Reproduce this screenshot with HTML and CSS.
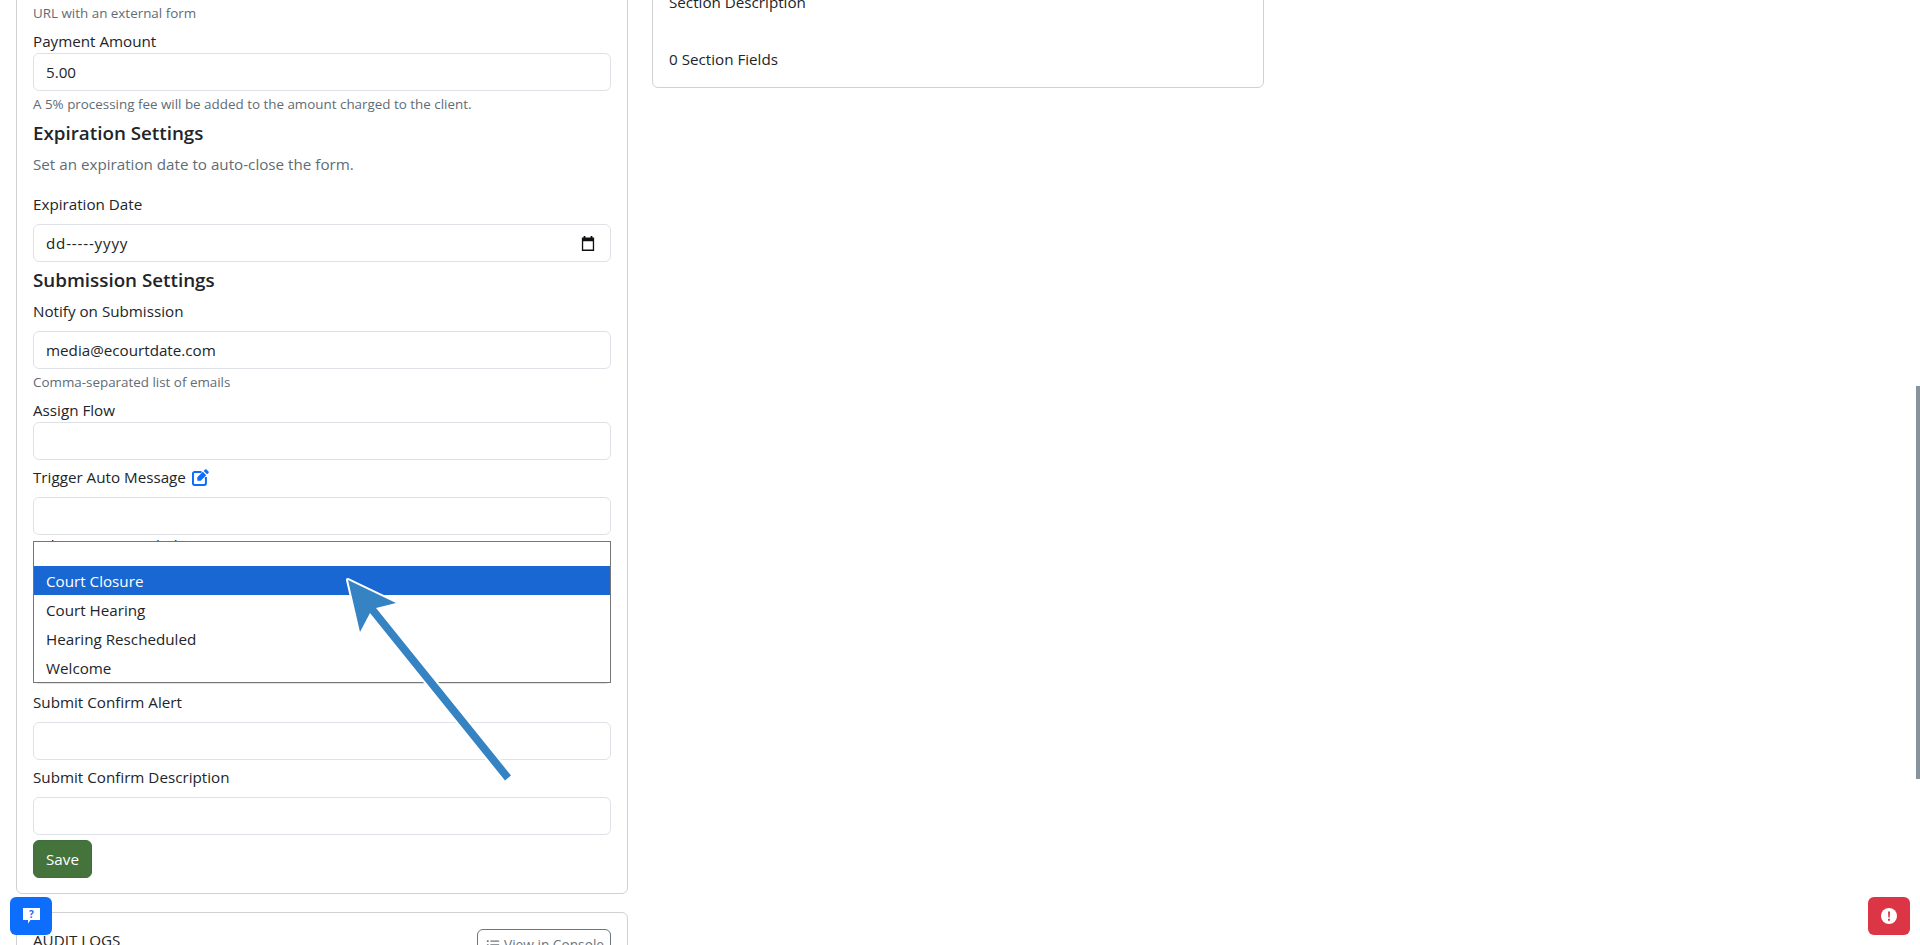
FILE: index.html
```html
<!DOCTYPE html>
<html lang="en">
<head>
    <meta charset="UTF-8">
    <meta name="viewport" content="width=device-width, initial-scale=1.0">
    <title>Form Settings</title>
    <link rel="stylesheet" href="styles.css">
</head>
<body>
    <div class="page">
        <div class="left-col">
            <div class="card form-card">
                <div class="help-text first">URL with an external form</div>

                <label class="field-label tight spaced">Payment Amount</label>
                <input class="form-input" type="text" value="5.00">
                <div class="help-text">A 5% processing fee will be added to the amount charged to the client.</div>

                <h5 class="section-title">Expiration Settings</h5>
                <p class="section-text">Set an expiration date to auto-close the form.</p>
                <label class="field-label">Expiration Date</label>
                <div class="form-input date-input">
                    <span class="date-text">dd-----yyyy</span>
                    <svg class="calendar-icon" viewBox="0 0 16 16" width="14" height="15" preserveAspectRatio="none">
                        <path fill="#111" d="M3 0h2v1.500h6V0h2v1.500h2V16H1V1.500h2zM2.500 5.500v9h11v-9z"/>
                    </svg>
                </div>

                <h5 class="section-title">Submission Settings</h5>
                <label class="field-label">Notify on Submission</label>
                <input class="form-input" type="text" value="media@ecourtdate.com">
                <div class="help-text">Comma-separated list of emails</div>

                <label class="field-label tight spaced">Assign Flow</label>
                <input class="form-input" type="text">

                <label class="field-label spaced">Trigger Auto Message
                    <svg class="edit-icon" viewBox="0 0 16 16" width="17" height="17">
                        <path fill="#0d6efd" d="M15.500 2.300 13.700.500a1 1 0 0 0-1.400 0L11 1.800 14.200 5l1.300-1.300a1 1 0 0 0 0-1.400zM13.400 5.800 10.200 2.600 5 7.800V11h3.200z"/>
                        <path fill="none" stroke="#0d6efd" stroke-width="1.900" d="M9 2.800H2.500A1.600 1.600 0 0 0 .9 4.400v9a1.600 1.600 0 0 0 1.600 1.600h9a1.600 1.600 0 0 0 1.600-1.600V7.500"/>
                    </svg>
                </label>
                <input class="form-input" type="text">

                <div class="behind-list">
                    <label class="field-label">Submit Button Label</label>
                    <input class="form-input" type="text">
                </div>

                <label class="field-label alert-label">Submit Confirm Alert</label>
                <input class="form-input" type="text">

                <label class="field-label spaced">Submit Confirm Description</label>
                <input class="form-input" type="text">

                <button class="save-btn">Save</button>

                <div class="select-list">
                    <div class="select-option blank"></div>
                    <div class="select-option active">Court Closure</div>
                    <div class="select-option">Court Hearing</div>
                    <div class="select-option">Hearing Rescheduled</div>
                    <div class="select-option">Welcome</div>
                </div>
            </div>

            <div class="card logs-card">
                <span class="logs-title">AUDIT LOGS</span>
                <button class="console-btn">
                    <svg viewBox="0 0 16 16" width="14" height="14">
                        <path fill="none" stroke="#6c757d" stroke-width="1.500" d="M5 3.500h10M5 8h10M5 12.500h10"/>
                        <path fill="#6c757d" d="M1 2.500h2v2H1zM1 7h2v2H1zM1 11.500h2v2H1z"/>
                    </svg>
                    View in Console
                </button>
            </div>
        </div>

        <div class="right-col">
            <div class="card section-card">
                <div class="section-line">Section Description</div>
                <div class="section-line fields">0 Section Fields</div>
            </div>
        </div>
    </div>

    <svg class="arrow" viewBox="0 0 1920 945" width="1920" height="945">
        <path class="arrow-shape" d="M348 580 396 603 376 608 511 775.500 505 780.500 370 613 360 632z"/>
    </svg>

    <div class="float-btn help-btn">
        <svg viewBox="0 0 17 16" width="17" height="16">
            <path fill="#fff" d="M0 0h17v12H7.500L5 15.500V12H0z"/>
            <text x="8.500" y="10" text-anchor="middle" class="icon-mark">?</text>
        </svg>
    </div>
    <div class="float-btn alert-btn">
        <svg viewBox="0 0 16 16" width="16" height="16">
            <circle cx="8" cy="8" r="8" fill="#fff"/>
            <path fill="#dc3545" d="M7 3.500h2L8.700 9.500H7.300zM7 10.700h2v2H7z"/>
        </svg>
    </div>
    <div class="scroll-thumb"></div>
</body>
</html>
```
FILE: styles.css
```css
html, body {
    height: 100%;
    overflow: hidden;
}

body {
    margin: 0;
    background: #fff;
    color: #212529;
    font-family: "Open Sans", "Noto Sans", sans-serif;
    font-size: 15.2px;
    line-height: 24px;
}

.page {
    display: flex;
    gap: 24px;
    margin-top: -40px;
    padding-left: 16px;
}

.left-col,
.right-col {
    width: 612px;
    flex: none;
}

.card {
    background: white;
    border: 1px solid #cfd2d5;
    border-radius: 6px;
    box-sizing: border-box;
}

.form-card {
    position: relative;
    padding: 42px 16px 16px;
    height: 934px;
}

.help-text {
    font-size: 13.4px;
    line-height: 21px;
    color: #5f6c75;
    margin-top: 3px;
}

.help-text.first {
    margin-top: 0;
}

.field-label {
    display: block;
    line-height: 22px;
    margin-bottom: 9px;
}

.field-label.tight {
    margin-bottom: 1px;
}

.field-label.spaced {
    margin-top: 6px;
}

.field-label.alert-label {
    margin-top: 7px;
}

.form-input {
    display: block;
    box-sizing: border-box;
    width: 100%;
    height: 38px;
    padding: 0 12px;
    border: 1px solid #dee2e6;
    border-radius: 6px;
    background: white;
    color: #212529;
    font: inherit;
    outline: none;
}

.date-input {
    display: flex;
    align-items: center;
    justify-content: space-between;
}

.date-text {
    letter-spacing: 0.8px;
}

.calendar-icon {
    margin-right: 3px;
}

.edit-icon {
    vertical-align: -3px;
    margin-left: 2px;
}

.section-title {
    margin: 6px 0 8px;
    font-size: 18.8px;
    line-height: 24px;
    font-weight: 600;
}

.section-text {
    margin: 0 0 18px;
    line-height: 22px;
    color: #5f6c75;
}

.behind-list {
    margin-top: -1px;
    height: 150px;
    display: flex;
    flex-direction: column;
    justify-content: space-between;
}

.save-btn {
    display: block;
    margin-top: 5px;
    width: 59px;
    height: 38px;
    padding: 0;
    border: 1px solid #3d6f3d;
    border-radius: 6px;
    background: #44743c;
    color: white;
    font: inherit;
}

/* native select popup, sits on top of the fields */
.select-list {
    position: absolute;
    left: 16px;
    right: 16px;
    top: 580px;
    border: 1px solid #767676;
    background: white;
}

.select-option {
    height: 29px;
    padding-left: 12px;
    line-height: 31px;
}

.select-option.blank {
    height: 24px;
}

.select-option.active {
    background: #1967d2;
    color: white;
}

.logs-card {
    display: flex;
    align-items: flex-start;
    justify-content: space-between;
    margin-top: 18px;
    padding: 16px;
    height: 80px;
}

.logs-title {
    line-height: 22px;
}

.console-btn {
    display: flex;
    align-items: center;
    gap: 4px;
    height: 31px;
    width: 134px;
    padding: 0 8px;
    background: white;
    border: 1px solid #6c757d;
    border-radius: 6px;
    color: #6c757d;
    font: inherit;
    font-size: 13.7px;
    white-space: nowrap;
}

.console-btn svg {
    flex: none;
}

.section-card {
    padding: 29px 16px 16px;
    height: 128px;
}

.section-line.fields {
    margin-top: 33px;
}

.arrow {
    position: fixed;
    left: 0;
    top: 0;
    pointer-events: none;
}

.arrow-shape {
    fill: #3583c3;
    stroke: #fff;
    stroke-width: 4px;
    stroke-linejoin: round;
    paint-order: stroke;
}

.float-btn {
    position: fixed;
    top: 897px;
    display: flex;
    align-items: center;
    justify-content: center;
    width: 42px;
    height: 38px;
    border-radius: 6px;
}

.help-btn {
    left: 10px;
    background: #0d6efd;
}

.alert-btn {
    right: 10px;
    background: #dc3545;
}

.icon-mark {
    font-size: 10px;
    font-weight: 700;
    fill: #0d6efd;
}

.scroll-thumb {
    position: fixed;
    right: 0;
    top: 386px;
    width: 4px;
    height: 393px;
    background: #87949d;
}
```
